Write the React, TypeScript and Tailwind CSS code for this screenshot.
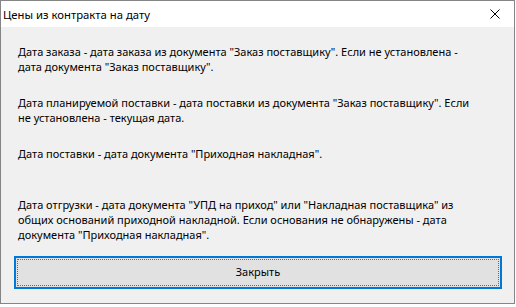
import React from 'react'

const font = { fontFamily: '"Noto Sans", "Open Sans", sans-serif' }

export default function App() {
  return (
    <div className="h-[307px] w-[516px] bg-white text-[11px] text-black" style={font}>
      <div className="flex h-[304px] w-[515px] flex-col border border-[#858585] bg-[#f0f0f0]">
        <div className="flex h-[26px] items-center justify-between bg-white pl-[2px] pr-[14px]">
          <span className="text-[11.3px] leading-[15px]">Цены из контракта на дату</span>
          <svg width="10" height="10" viewBox="0 0 10 10" className="mt-[-1px]">
            <path d="M0.5 0.5 L9.5 9.5 M9.5 0.5 L0.5 9.5" stroke="#000" strokeWidth="1" />
          </svg>
        </div>
        <div className="flex flex-col whitespace-nowrap px-[17px] pt-[17px] leading-[15px]">
          <p className="h-[51px]">
            Дата заказа - дата заказа из документа "Заказ поставщику". Если не установлена -<br />
            дата документа "Заказ поставщику".
          </p>
          <p className="h-[51px]">
            Дата планируемой поставки - дата поставки из документа "Заказ поставщику". Если<br />
            не установлена - текущая дата.
          </p>
          <p className="h-[51px]">Дата поставки - дата документа "Приходная накладная".</p>
          <p className="h-[45px]">
            Дата отгрузки - дата документа "УПД на приход" или "Накладная поставщика" из<br />
            общих оснований приходной накладной. Если основания не обнаружены - дата<br />
            документа "Приходная накладная".
          </p>
        </div>
        <div className="mt-[14px] pl-[13px]">
          <button className="flex h-[33px] w-[488px] items-center justify-center border-2 border-[#0078d7] bg-[#e1e1e1] p-[1px]">
            <span className="flex h-full w-full items-center justify-center border border-dotted border-[#6b6b6b]">
              Закрыть
            </span>
          </button>
        </div>
      </div>
    </div>
  )
}
